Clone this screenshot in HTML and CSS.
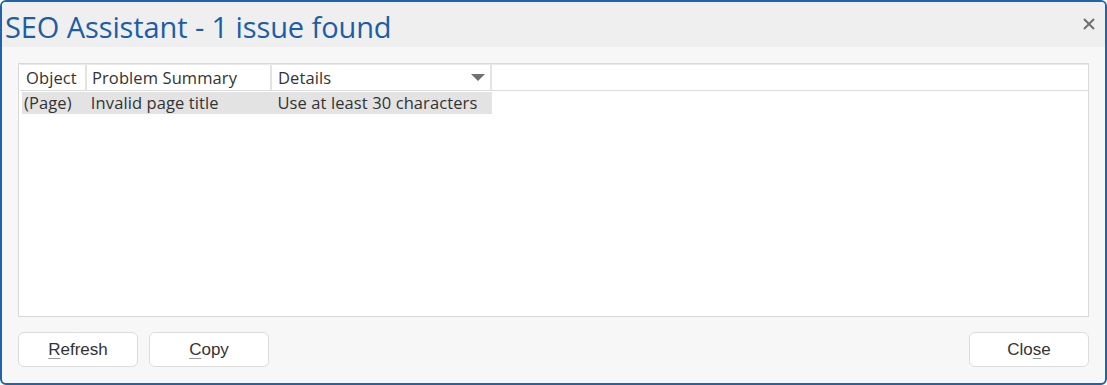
FILE: index.html
```html
<!DOCTYPE html>
<html lang="en">
<head>
    <meta charset="UTF-8">
    <title>SEO Assistant</title>
    <link rel="stylesheet" href="styles.css">
</head>
<body>
    <div class="window">
        <div class="titlebar">
            <h1>SEO Assistant - 1 issue found</h1>
            <span class="close-x">
                <svg width="12" height="12" viewBox="0 0 12 12"><path d="M1 1 L11 11 M11 1 L1 11" stroke="#707070" stroke-width="2"/></svg>
            </span>
        </div>

        <div class="content">
            <div class="listbox">
                <div class="list-header">
                    <div class="col col-object">Object</div>
                    <div class="col col-summary">Problem Summary</div>
                    <div class="col col-details">Details <span class="sort-arrow"></span></div>
                    <div class="col col-rest"></div>
                </div>
                <div class="list-row selected">
                    <div class="cell col-object">(Page)</div>
                    <div class="cell col-summary">Invalid page title</div>
                    <div class="cell col-details">Use at least 30 characters</div>
                </div>
            </div>

            <div class="buttons">
                <button><u>R</u>efresh</button>
                <button><u>C</u>opy</button>
                <span class="spacer"></span>
                <button>Clo<u>s</u>e</button>
            </div>
        </div>
    </div>
</body>
</html>
```

FILE: styles.css
```css
body {
    margin: 0;
    background-color: #ffffff;
    font-family: "Open Sans", "Noto Sans", sans-serif;
}

.window {
    width: 1107px;
    height: 385px;
    box-sizing: border-box;
    border: 2px solid #1f63ae;
    border-radius: 6px;
    background-color: #f7f7f7;
    overflow: hidden;
}

.titlebar {
    height: 45px;
    background-color: #efefef;
    display: flex;
    align-items: center;
    justify-content: space-between;
    padding: 0 10px 0 3px;
}

.titlebar h1 {
    margin: 3px 0 0 0;
    font-weight: normal;
    font-size: 29px;
    color: #1b5ea7;
    letter-spacing: -0.1px;
}

.close-x {
    display: flex;
    margin-top: -2px;
}

.content {
    padding: 16px 16px 0 16px;
}

.listbox {
    height: 254px;
    box-sizing: border-box;
    background-color: #ffffff;
    border: 1px solid #d9d9d9;
    font-size: 16.5px;
    letter-spacing: 0.1px;
    color: #333333;
}

.list-header {
    display: flex;
    height: 25px;
    border-bottom: 1px solid #dcdcdc;
    border-top: 1px solid #e8e8e8;
    margin-left: 1px;
}

.list-header .col {
    border-right: 2px solid #e3e3e3;
    box-sizing: border-box;
    line-height: 26px;
    padding-left: 6px;
}

.list-header .col-rest {
    flex: 1;
    border-right: none;
}

.col-object { width: 67px; }
.col-summary { width: 185px; }
.col-details { width: 220px; position: relative; }

.list-header .col-summary { padding-left: 5px; }

.sort-arrow {
    position: absolute;
    right: 5px;
    top: 9px;
    width: 0;
    height: 0;
    border-left: 7px solid transparent;
    border-right: 7px solid transparent;
    border-top: 7px solid #707070;
}

.list-row {
    display: flex;
    height: 22px;
    margin: 1px 0 0 3px;
    width: 470px;
    line-height: 22px;
}

.list-row.selected {
    background-color: #e3e3e3;
}

.list-row .cell {
    box-sizing: border-box;
    padding-left: 2px;
}

.list-row .col-object { width: 65px; }
.list-row .col-summary { width: 186px; padding-left: 4px; }
.list-row .col-details { padding-left: 5px; }

.buttons {
    display: flex;
    gap: 11px;
    margin-top: 15px;
}

.spacer {
    flex: 1;
}

button {
    width: 120px;
    height: 35px;
    background-color: #ffffff;
    border: 1px solid #dcdcdc;
    border-radius: 6px;
    font-family: "Liberation Sans", Arial, sans-serif;
    font-size: 17px;
    color: #333333;
    padding: 0;
}

button u {
    text-decoration-color: #9a9a9a;
    text-underline-offset: 3px;
}
```
